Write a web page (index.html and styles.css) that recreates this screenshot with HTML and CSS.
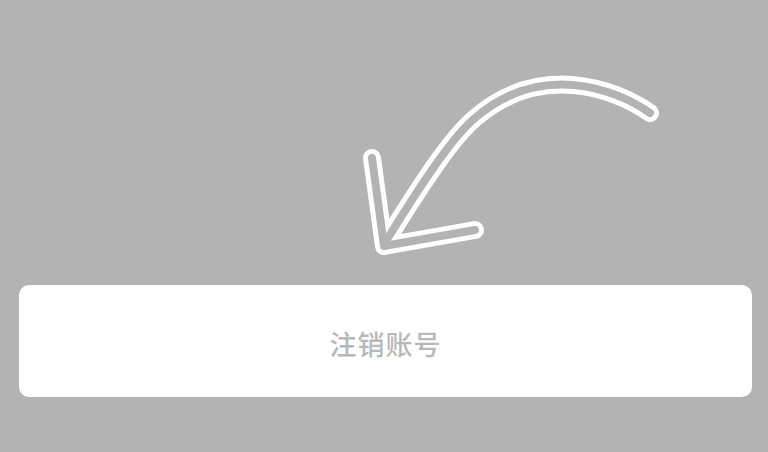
FILE: index.html
```html
<!DOCTYPE html>
<html>
<head>
<meta charset="utf-8">
<link rel="stylesheet" href="styles.css">
</head>
<body>
<div class="page">
  <div class="hint">
    <svg class="arrow" width="768" height="285" viewBox="0 0 768 285">
      <g fill="none" stroke-linecap="round" stroke-linejoin="round">
        <g stroke="#ffffff" stroke-width="18">
          <path d="M650,113 C615,88 540,62 475,118 C455,135 430,170 388,238"/>
          <path d="M372,158 L384,246 L475,230"/>
        </g>
        <g stroke="#b3b3b3" stroke-width="8">
          <path d="M650,113 C615,88 540,62 475,118 C455,135 430,170 388,238"/>
          <path d="M372,158 L384,246 L475,230"/>
        </g>
      </g>
    </svg>
  </div>
  <div class="card">
    <span class="label">注销账号</span>
  </div>
</div>
</body>
</html>
```
FILE: styles.css
```css
html, body {
  margin: 0;
  padding: 0;
  background: #b3b3b3;
  width: 768px;
  height: 452px;
  overflow: hidden;
}
.page {
  display: flex;
  flex-direction: column;
  width: 768px;
  height: 452px;
}
.hint {
  height: 285px;
}
.arrow {
  display: block;
}
.card {
  margin: 0 16px 0 19px;
  height: 112px;
  background: #ffffff;
  border-radius: 10px;
  display: flex;
  align-items: center;
  justify-content: center;
}
.label {
  font-family: "Noto Sans CJK SC", "Noto Sans", sans-serif;
  font-size: 27px;
  font-weight: 500;
  color: #b8b8b8;
  letter-spacing: 1px;
  position: relative;
  top: 2px;
}
```
